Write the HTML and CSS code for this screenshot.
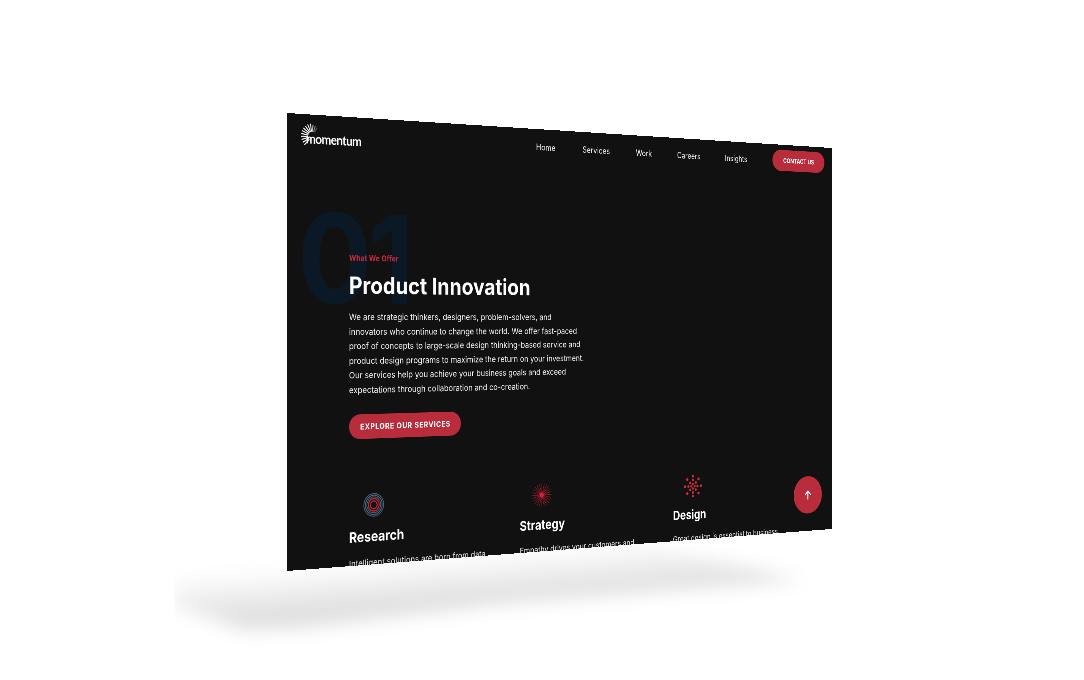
FILE: index.html
```html
<!DOCTYPE html>
<html lang="en">
<head>
    <meta charset="UTF-8">
    <title>Momentum</title>
    <link rel="stylesheet" href="styles.css">
</head>
<body>
<div class="stage">
    <svg class="floor-shadow" width="1084" height="680" viewBox="0 0 1084 680">
        <defs>
            <filter id="softBlur" x="-20%" y="-50%" width="140%" height="200%"><feGaussianBlur stdDeviation="9"/></filter>
            <linearGradient id="shadowFade" gradientUnits="userSpaceOnUse" x1="312" y1="566" x2="315.5" y2="612">
                <stop offset="0" stop-color="#000" stop-opacity="0"/>
                <stop offset="1" stop-color="#000" stop-opacity="0.125"/>
            </linearGradient>
            <clipPath id="shadowClip"><rect x="174" y="500" width="700" height="160"/></clipPath>
        </defs>
        <g clip-path="url(#shadowClip)">
            <polygon points="175,545 600,535 800,580 510,603 300,628 245,630 175,606" fill="url(#shadowFade)" filter="url(#softBlur)"/>
        </g>
    </svg>

    <div class="screen">
        <header class="topbar">
            <div class="logo">
                <svg class="logo-burst" width="44" height="44" viewBox="0 0 44 44">
                    <g stroke="#fff" stroke-width="2.1">
                        <line x1="30" y1="1" x2="30" y2="17" transform="rotate(-10 30 26)"/>
                        <line x1="30" y1="1" x2="30" y2="17" transform="rotate(-24 30 26)"/>
                        <line x1="30" y1="1" x2="30" y2="17" transform="rotate(-38 30 26)"/>
                        <line x1="30" y1="1" x2="30" y2="17" transform="rotate(-52 30 26)"/>
                        <line x1="30" y1="1" x2="30" y2="17" transform="rotate(-66 30 26)"/>
                        <line x1="30" y1="1" x2="30" y2="17" transform="rotate(-80 30 26)"/>
                        <line x1="30" y1="1" x2="30" y2="17" transform="rotate(-94 30 26)"/>
                        <line x1="30" y1="1" x2="30" y2="17" transform="rotate(-108 30 26)"/>
                        <line x1="30" y1="1" x2="30" y2="17" transform="rotate(-122 30 26)"/>
                        <line x1="30" y1="1" x2="30" y2="17" transform="rotate(-136 30 26)"/>
                        <line x1="30" y1="3" x2="30" y2="17" transform="rotate(4 30 26)" opacity="0.7"/>
                        <line x1="30" y1="4" x2="30" y2="17" transform="rotate(18 30 26)" opacity="0.5"/>
                        <line x1="30" y1="6" x2="30" y2="17" transform="rotate(32 30 26)" opacity="0.3"/>
                    </g>
                </svg>
                <span class="logo-text">momentum</span>
            </div>
            <nav class="mainnav">
                <a>Home</a>
                <a>Services</a>
                <a>Work</a>
                <a>Careers</a>
                <a>Insights</a>
            </nav>
            <a class="pill pill-contact">CONTACT US</a>
        </header>

        <section class="hero">
            <div class="hero-num">01</div>
            <div class="hero-kicker">What We Offer</div>
            <h1 class="hero-title">Product Innovation</h1>
            <p class="hero-text">We are strategic thinkers, designers, problem-solvers, and<br>
            innovators who continue to change the world. We offer fast-paced<br>
            proof of concepts to large-scale design thinking-based service and<br>
            product design programs to maximize the return on your investment.<br>
            Our services help you achieve your business goals and exceed<br>
            expectations through collaboration and co-creation.</p>
            <a class="pill pill-explore">EXPLORE OUR SERVICES</a>
        </section>

        <section class="cards">
            <div class="card">
                <svg class="card-icon" width="50" height="50" viewBox="0 0 50 50" fill="none">
                    <circle cx="25" cy="25" r="23" stroke="#4a6078" stroke-width="1.8"/>
                    <circle cx="25" cy="25" r="19.5" stroke="#55708c" stroke-width="1.8"/>
                    <circle cx="25" cy="25" r="16" stroke="#4a6078" stroke-width="1.8"/>
                    <circle cx="25" cy="25" r="12.5" stroke="#c22a3c" stroke-width="2.4"/>
                    <circle cx="25" cy="25" r="8" stroke="#c22a3c" stroke-width="2.4"/>
                </svg>
                <h3>Research</h3>
                <p>Intelligent solutions are born from data</p>
            </div>
            <div class="card">
                <svg class="card-icon" width="50" height="50" viewBox="0 0 50 50">
                    <g stroke="#9c1a2b" stroke-width="1.3">
                        <line x1="25" y1="0" x2="25" y2="50"/>
                        <line x1="25" y1="0" x2="25" y2="50" transform="rotate(15 25 25)"/>
                        <line x1="25" y1="0" x2="25" y2="50" transform="rotate(30 25 25)"/>
                        <line x1="25" y1="0" x2="25" y2="50" transform="rotate(45 25 25)"/>
                        <line x1="25" y1="0" x2="25" y2="50" transform="rotate(60 25 25)"/>
                        <line x1="25" y1="0" x2="25" y2="50" transform="rotate(75 25 25)"/>
                        <line x1="25" y1="0" x2="25" y2="50" transform="rotate(90 25 25)"/>
                        <line x1="25" y1="0" x2="25" y2="50" transform="rotate(105 25 25)"/>
                        <line x1="25" y1="0" x2="25" y2="50" transform="rotate(120 25 25)"/>
                        <line x1="25" y1="0" x2="25" y2="50" transform="rotate(135 25 25)"/>
                        <line x1="25" y1="0" x2="25" y2="50" transform="rotate(150 25 25)"/>
                        <line x1="25" y1="0" x2="25" y2="50" transform="rotate(165 25 25)"/>
                    </g>
                    <circle cx="25" cy="25" r="5" fill="#d81f38"/>
                </svg>
                <h3>Strategy</h3>
                <p>Empathy drives your customers and</p>
            </div>
            <div class="card">
                <svg class="card-icon" width="50" height="50" viewBox="0 0 50 50" fill="#d2293f">
                    <circle cx="25" cy="2" r="3.2"/>
                    <circle cx="25" cy="48" r="3.2"/>
                    <circle cx="2" cy="25" r="3.2"/>
                    <circle cx="48" cy="25" r="3.2"/>
                    <circle cx="9" cy="9" r="3.2"/>
                    <circle cx="41" cy="9" r="3.2"/>
                    <circle cx="9" cy="41" r="3.2"/>
                    <circle cx="41" cy="41" r="3.2"/>
                    <circle cx="25" cy="11" r="3"/>
                    <circle cx="25" cy="39" r="3"/>
                    <circle cx="12" cy="25" r="3"/>
                    <circle cx="38" cy="25" r="3"/>
                    <circle cx="17" cy="17" r="3"/>
                    <circle cx="33" cy="17" r="3"/>
                    <circle cx="17" cy="33" r="3"/>
                    <circle cx="33" cy="33" r="3"/>
                    <circle cx="20" cy="25" r="2.8"/>
                    <circle cx="30" cy="25" r="2.8"/>
                    <circle cx="25" cy="20" r="2.8"/>
                    <circle cx="25" cy="30" r="2.8"/>
                </svg>
                <h3>Design</h3>
                <p>Great design is essential to business</p>
            </div>
        </section>

        <a class="to-top">
            <svg width="26" height="26" viewBox="0 0 24 24" fill="none" stroke="#fff" stroke-width="2.8" stroke-linecap="round" stroke-linejoin="round">
                <path d="M12 21V4M5 11l7-7 7 7"/>
            </svg>
        </a>
    </div>
</div>
</body>
</html>
```

FILE: styles.css
```css
html, body {
    margin: 0;
    padding: 0;
    background: #fff;
}

.stage {
    position: relative;
    width: 1084px;
    height: 680px;
    overflow: hidden;
    background: #fff;
}

.floor-shadow {
    position: absolute;
    left: 0;
    top: 0;
}

/* the page is laid out flat at 1440x907, then put in perspective */
.screen {
    position: absolute;
    left: 0;
    top: 0;
    width: 1440px;
    height: 907px;
    box-sizing: border-box;
    padding: 12px 18px 0 31px;
    overflow: hidden;
    background: #111;
    color: #fff;
    font-family: Inter, "Liberation Sans", sans-serif;
    transform-origin: 0 0;
    transform: matrix3d(0.495241, 0.045077, 0, 0.00014035, 0, 0.504961, 0, 0, 0, 0, 1, 0, 287, 113, 0, 1);
    will-change: transform;
}

.topbar {
    display: flex;
    align-items: center;
    height: 49px;
}

.logo {
    position: relative;
    width: 138px;
    height: 49px;
    margin-right: 424px;
}

.logo-burst {
    position: absolute;
    left: -5px;
    top: 5px;
}

.logo-text {
    position: absolute;
    left: 11px;
    top: 20px;
    font-family: Lato, sans-serif;
    font-size: 26px;
    font-weight: 700;
    line-height: 32px;
    letter-spacing: -1px;
    color: #fff;
}

.mainnav {
    display: flex;
    gap: 71px;
    font-size: 18px;
    color: #f2f2f2;
    position: relative;
    top: 2px;
}

.pill {
    display: flex;
    align-items: center;
    justify-content: center;
    background: #b92c3b;
    color: #fff;
    font-weight: 700;
    border-radius: 30px;
}

.pill-contact {
    width: 161px;
    height: 49px;
    margin-left: 76px;
    font-size: 14.5px;
}

.hero {
    position: relative;
    height: 600px;
    padding-left: 108px;
    padding-top: 213px;
    box-sizing: border-box;
}

.hero-num {
    position: absolute;
    left: -8px;
    top: 74px;
    font-size: 250px;
    line-height: 300px;
    font-weight: 700;
    letter-spacing: -8px;
    color: #0b1826;
}

.hero-kicker {
    position: relative;
    font-size: 16px;
    line-height: 20px;
    font-weight: 700;
    color: #c8283c;
}

.hero-title {
    position: relative;
    margin: 18px 0 0;
    font-size: 47.5px;
    line-height: 56px;
    font-weight: 700;
    color: #fff;
}

.hero-text {
    position: relative;
    margin: 21px 0 0;
    font-size: 17.9px;
    line-height: 29.5px;
    color: #f4f4f4;
}

.pill-explore {
    position: relative;
    width: 265px;
    height: 50px;
    margin-top: 35px;
    font-size: 16px;
    letter-spacing: 1px;
}

.cards {
    display: flex;
    margin-left: 108px;
    margin-top: 100px;
}

.card {
    width: 412px;
}

.card-icon {
    display: block;
    margin-left: 32px;
}

.card h3 {
    margin: 21px 0 0;
    font-size: 28px;
    line-height: 36px;
    font-weight: 700;
    color: #fff;
}

.card p {
    margin: 21px 0 0;
    font-size: 17.9px;
    line-height: 28px;
    color: #e6e6e6;
}

.to-top {
    position: absolute;
    left: 1320px;
    top: 778px;
    width: 88px;
    height: 88px;
    display: flex;
    align-items: center;
    justify-content: center;
    border-radius: 50%;
    background: #b92c3b;
}
```
